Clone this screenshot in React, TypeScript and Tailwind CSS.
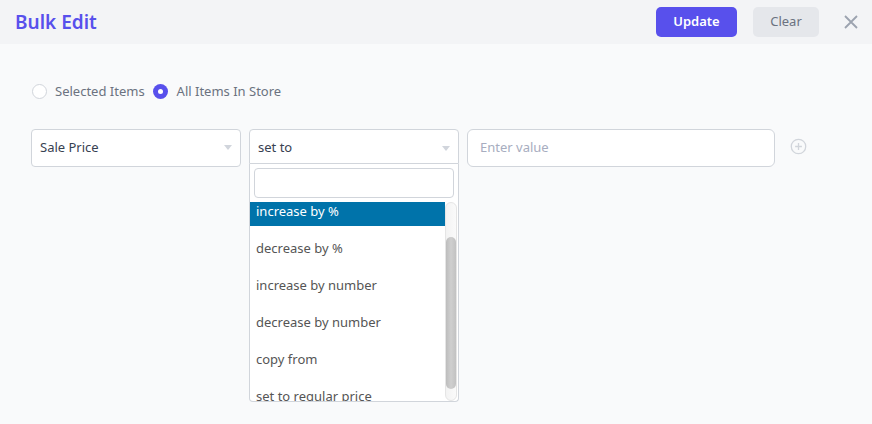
import React from 'react';

const options = [
  'increase by %',
  'decrease by %',
  'increase by number',
  'decrease by number',
  'copy from',
  'set to regular price',
];

const Caret = () => (
  <span className="w-0 h-0 border-x-[4px] border-x-transparent border-t-[5px] border-t-gray-300" />
);

const App: React.FC = () => {
  return (
    <div className="w-[872px] h-[424px] bg-[#f9fafb] text-[13px] font-['Noto_Sans','Open_Sans',sans-serif] overflow-hidden">
      {/* Header */}
      <header className="h-[44px] bg-[#f3f4f6] flex items-center justify-between pl-[15px] pr-[13px]">
        <h1 className="text-[19px] font-semibold text-[#5850ec] leading-none">Bulk Edit</h1>
        <div className="flex items-center">
          <button className="h-[30px] w-[81px] rounded-[5px] bg-[#5850ec] text-white text-[13px] font-semibold">
            Update
          </button>
          <button className="ml-[16px] h-[30px] w-[66px] rounded-[5px] bg-[#e5e7eb] text-[#6b7280] text-[13px]">
            Clear
          </button>
          <button className="ml-[24px] text-[#9ca3af]">
            <svg width="16" height="16" viewBox="0 0 16 16" fill="none" stroke="currentColor" strokeWidth="1.8">
              <path d="M2 2l12 12M14 2L2 14" />
            </svg>
          </button>
        </div>
      </header>

      {/* Scope radios */}
      <div className="flex items-center pl-[32px] mt-[38px] text-[#6b7280]">
        <span className="w-[15px] h-[15px] rounded-full border border-[#d1d5db] bg-white" />
        <span className="ml-[8px]">Selected Items</span>
        <span className="ml-[8px] w-[15px] h-[15px] rounded-full bg-[#5850ec] flex items-center justify-center">
          <span className="w-[5px] h-[5px] rounded-full bg-white" />
        </span>
        <span className="ml-[9px]">All Items In Store</span>
      </div>

      {/* Edit row */}
      <div className="flex items-start pl-[31px] mt-[27px]">
        <div className="w-[210px] h-[38px] rounded-[4px] border border-[#d1d5db] bg-white flex items-center justify-between pl-[8px] pr-[8px] text-[#374151]">
          <span>Sale Price</span>
          <Caret />
        </div>

        <div className="ml-[8px] w-[210px]">
          <div className="h-[35px] rounded-t-[4px] border border-[#d1d5db] bg-white flex items-center justify-between pl-[8px] pr-[8px] pt-[4px] text-[#374151]">
            <span>set to</span>
            <Caret />
          </div>
          <div className="border border-t-0 border-[#d1d5db] bg-white rounded-b-[4px]">
            <div className="p-[4px]">
              <div className="h-[30px] rounded-[4px] border border-[#d1d5db]" />
            </div>
            <div className="flex h-[199px]">
              <div className="flex-1 overflow-hidden">
                <ul className="-mt-[13px]">
                  {options.map((o, i) => (
                    <li
                      key={o}
                      className={`h-[37px] pl-[6px] pt-[13px] leading-[18px] whitespace-nowrap ${
                        i === 0 ? 'bg-[#0073aa] text-white' : 'text-[#555]'
                      }`}
                    >
                      {o}
                    </li>
                  ))}
                </ul>
              </div>
              <div className="w-[12px] mr-[1px] rounded-full bg-gradient-to-r from-[#f3f3f3] to-[#fafafa] border border-[#e5e5e5] flex flex-col">
                <div className="h-[34px]" />
                <div className="h-[152px] rounded-full bg-gradient-to-r from-[#bdbdbd] via-[#cfcfcf] to-[#c2c2c2]" />
              </div>
            </div>
          </div>
        </div>

        <div className="ml-[8px] w-[308px] h-[38px] rounded-[6px] border border-[#d1d5db] bg-white flex items-center pl-[12px] text-[#a7adc0]">
          Enter value
        </div>

        <svg className="ml-[15px] mt-[9px] text-[#d1d5db]" width="17" height="17" viewBox="0 0 20 20" fill="none" stroke="currentColor" strokeWidth="1.5">
          <circle cx="10" cy="10" r="8.5" />
          <path d="M10 6v8M6 10h8" />
        </svg>
      </div>
    </div>
  );
};

export default App;
